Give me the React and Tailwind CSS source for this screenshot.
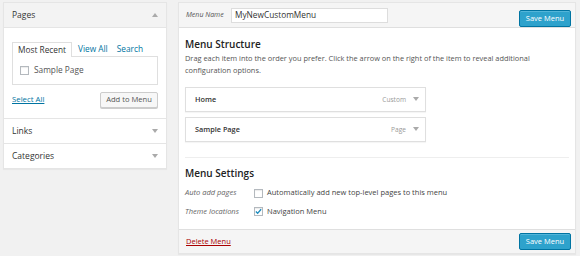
const MENU_ITEMS = [
  { title: "Home", type: "Custom" },
  { title: "Sample Page", type: "Page" },
];

function Arrow({ up = false }) {
  return (
    <svg width="6" height="4" viewBox="0 0 6 4" className="shrink-0">
      <path d={up ? "M0 4 L3 0 L6 4 Z" : "M0 0 L6 0 L3 4 Z"} fill="#aaaaaa" />
    </svg>
  );
}

function Checkbox({ checked = false }) {
  return (
    <span className="flex h-[9px] w-[9px] shrink-0 items-center justify-center border border-[#b4b9be] bg-white shadow-[inset_0_1px_1px_rgba(0,0,0,0.08)]">
      {checked && (
        <svg width="8" height="7" viewBox="0 0 8 7">
          <path
            d="M1 3.6 L3 5.6 L7 1"
            fill="none"
            stroke="#1e8cbe"
            strokeWidth="1.6"
          />
        </svg>
      )}
    </span>
  );
}

function SaveButton() {
  return (
    <button
      type="button"
      className="h-[17px] w-[52px] rounded-[2px] border border-[#0074a2] bg-[#2ea2cc] text-[7.5px] leading-none text-white shadow-[inset_0_1px_0_rgba(120,200,230,0.5)]"
    >
      Save Menu
    </button>
  );
}

function SidePanel() {
  return (
    <div className="w-[164px] shrink-0 border border-[#e5e5e5] bg-white shadow-[0_1px_1px_rgba(0,0,0,0.04)]">
      <div className="flex h-[25px] items-center justify-between border-b border-[#e5e5e5] bg-[#f3f3f3] pl-[8px] pr-[8px]">
        <span className="text-[8.5px] text-[#333]">Pages</span>
        <Arrow up />
      </div>
      <div className="px-[8px] pb-[10px] pt-[14px]">
        <div className="flex items-end text-[8.3px] leading-[14px]">
          <span className="relative -mb-px border border-b-0 border-[#dfdfdf] bg-white px-[5px] text-[#333]">
            Most Recent
          </span>
          <span className="ml-[6px] text-[#0074a2]">View All</span>
          <span className="ml-[9px] text-[#0074a2]">Search</span>
        </div>
        <div className="flex h-[29px] items-center gap-[5px] border border-[#dfdfdf] bg-white px-[7px] text-[8.3px] text-[#555]">
          <Checkbox />
          <span>Sample Page</span>
        </div>
        <div className="mt-[7px] flex items-center justify-between">
          <span className="text-[7.8px] text-[#0074a2] underline">
            Select All
          </span>
          <button
            type="button"
            className="h-[16px] w-[58px] rounded-[2px] border border-[#cccccc] bg-[#f7f7f7] text-[7.6px] leading-none text-[#555] shadow-[0_1px_0_#ccc]"
          >
            Add to Menu
          </button>
        </div>
      </div>
      {["Links", "Categories"].map((label) => (
        <div
          key={label}
          className="flex h-[25px] items-center justify-between border-t border-[#e5e5e5] pl-[8px] pr-[8px]"
        >
          <span className="text-[8.5px] text-[#333]">{label}</span>
          <Arrow />
        </div>
      ))}
    </div>
  );
}

function MenuPanel() {
  return (
    <div className="w-[398px] shrink-0 border border-[#e5e5e5] bg-white shadow-[0_1px_1px_rgba(0,0,0,0.04)]">
      <div className="flex h-[25px] items-center border-b border-[#dfdfdf] bg-[#f5f5f5] pl-[7px] pr-[4px]">
        <span className="w-[45px] text-[7px] italic text-[#555]">
          Menu Name
        </span>
        <div className="flex h-[15px] w-[157px] items-center border border-[#dddddd] bg-white px-[3px] text-[8.3px] text-[#333]">
          MyNewCustomMenu
        </div>
        <div className="ml-auto">
          <SaveButton />
        </div>
      </div>

      <div className="px-[6px] pb-[8px] pt-[9px]">
        <h3 className="text-[10px] font-semibold leading-[14px] text-[#222]">
          Menu Structure
        </h3>
        <p className="mt-px text-[7.4px] leading-[12px] text-[#555]">
          Drag each item into the order you prefer. Click the arrow on the
          right of the item to reveal additional configuration options.
        </p>
        <div className="mt-[11px] flex w-[241px] flex-col gap-[5px]">
          {MENU_ITEMS.map((item) => (
            <div
              key={item.title}
              className="flex h-[25px] items-center justify-between border border-[#dfdfdf] bg-white pl-[9px] pr-[6px] shadow-[0_1px_1px_rgba(0,0,0,0.04)]"
            >
              <span className="text-[7.3px] font-semibold text-[#333]">
                {item.title}
              </span>
              <span className="flex items-center gap-[7px]">
                <span className="text-[6.6px] text-[#999]">{item.type}</span>
                <Arrow />
              </span>
            </div>
          ))}
        </div>

        <div className="mt-[15px] border-t border-[#eeeeee]" />

        <h3 className="mt-[8px] text-[10px] font-semibold leading-[14px] text-[#222]">
          Menu Settings
        </h3>
        <div className="mt-[4px] flex flex-col text-[7.5px]">
          <div className="flex h-[18px] items-center">
            <span className="w-[69px] italic text-[#666]">Auto add pages</span>
            <Checkbox />
            <span className="ml-[4px] text-[#444]">
              Automatically add new top-level pages to this menu
            </span>
          </div>
          <div className="flex h-[19px] items-center">
            <span className="w-[69px] italic text-[#666]">
              Theme locations
            </span>
            <Checkbox checked />
            <span className="ml-[4px] text-[#444]">Navigation Menu</span>
          </div>
        </div>
      </div>

      <div className="flex h-[24px] items-center justify-between border-t border-[#dfdfdf] bg-[#f5f5f5] pl-[7px] pr-[4px]">
        <span className="text-[7.5px] text-[#a00] underline">Delete Menu</span>
        <SaveButton />
      </div>
    </div>
  );
}

export default function App() {
  return (
    <div className="flex min-h-screen items-start gap-[11px] bg-[#f1f1f1] pl-[3px] pr-[4px] pt-[2px] font-['Open_Sans',sans-serif]">
      <SidePanel />
      <MenuPanel />
    </div>
  );
}
